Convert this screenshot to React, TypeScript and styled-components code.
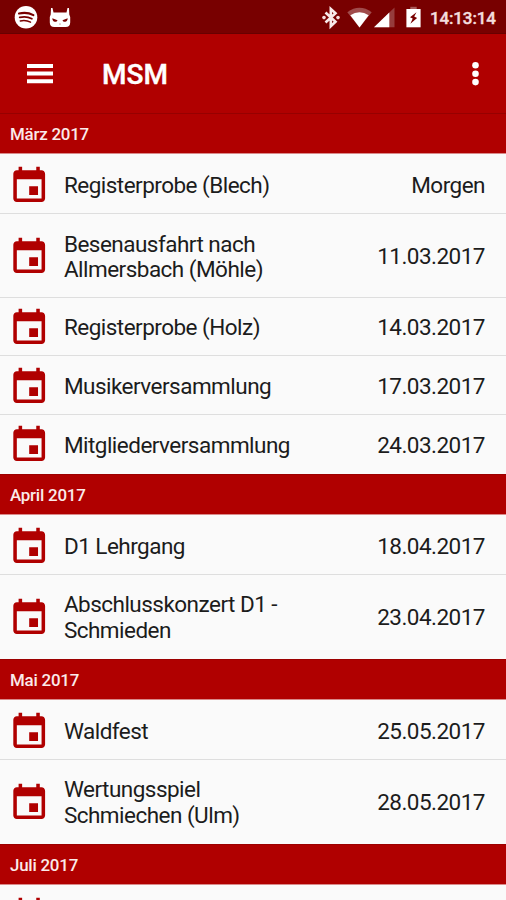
import React from "react";
import styled, { createGlobalStyle } from "styled-components";

const GlobalStyle = createGlobalStyle`
  * { box-sizing: border-box; }
  html, body { margin: 0; height: 900px; overflow: hidden; background: #fafafa; }
  body { font-family: Roboto, "Liberation Sans", sans-serif; }
`;

const Screen = styled.div`
  width: 506px;
  height: 900px;
  overflow: hidden;
  display: flex;
  flex-direction: column;
  background: #fafafa;
`;

const StatusBar = styled.header`
  height: 34px;
  flex: none;
  display: flex;
  align-items: center;
  justify-content: space-between;
  padding: 0 10px 0 14px;
  background: #780000;
  border-bottom: 1px solid #680000;
`;

const StatusGroup = styled.div`
  display: flex;
  align-items: center;
  height: 100%;
  svg { display: block; flex: none; }
  svg + svg { margin-left: 11px; }
`;

const Clock = styled.span`
  width: 66px;
  margin-left: 9px;
  padding-top: 2px;
  font-size: 17px;
  line-height: 20px;
  font-weight: 500;
  letter-spacing: -0.15px;
  white-space: nowrap;
  color: #f4dede;
  -webkit-text-stroke: 0.4px #f4dede;
`;

const AppBar = styled.div`
  height: 80px;
  flex: none;
  display: flex;
  align-items: center;
  padding: 0 17px 0 19px;
  background: #b00000;
  border-bottom: 1px solid #960000;
  svg { display: block; }
`;

const BarButton = styled.button`
  border: 0;
  padding: 0;
  background: none;
  color: #fff;
`;

const Title = styled.h1`
  flex: 1;
  margin: 2px 0 0 41px;
  font-size: 28px;
  line-height: 34px;
  font-weight: 500;
  color: #fff;
  -webkit-text-stroke: 0.4px #fff;
`;

const List = styled.main`
  flex: none;
`;

const MonthHeader = styled.h2<{ $first: boolean }>`
  height: ${(p) => (p.$first ? 40 : 41)}px;
  margin: 0;
  padding: ${(p) => (p.$first ? 0 : 1)}px 10px 0;
  display: flex;
  align-items: center;
  background: #b00000;
  border-top: ${(p) => (p.$first ? 0 : 1)}px solid #9c0000;
  border-bottom: 1px solid #d98a8a;
  font-size: 16.9px;
  font-weight: 500;
  letter-spacing: -0.22px;
  color: #fbeaea;
`;

const Events = styled.div`
  padding: 1.45px 0 0.45px;
`;

const EventRow = styled.div<{ $tall: boolean }>`
  height: ${(p) => (p.$tall ? 83.6 : 58.6)}px;
  display: flex;
  align-items: center;
  padding: 3.5px 21px 0 7.5px;
  border-bottom: 1px solid #dedede;
  font-size: 22.5px;
  line-height: 25.5px;
  letter-spacing: -0.52px;
  color: #1c1c1c;

  &:last-child { border-bottom-color: transparent; }
`;

const EventName = styled.span`
  flex: 1;
  margin-left: 14px;
  white-space: pre-line;
`;

const EventDate = styled.span`
  white-space: nowrap;
`;

const CalendarIcon = styled.svg`
  width: 42.4px;
  height: 42.4px;
  flex: none;
  margin-top: 0.5px;
  fill: #b00000;
`;

type Item = { name: string; date: string };

const months: { label: string; items: Item[] }[] = [
  {
    label: "März 2017",
    items: [
      { name: "Registerprobe (Blech)", date: "Morgen" },
      { name: "Besenausfahrt nach\nAllmersbach (Möhle)", date: "11.03.2017" },
      { name: "Registerprobe (Holz)", date: "14.03.2017" },
      { name: "Musikerversammlung", date: "17.03.2017" },
      { name: "Mitgliederversammlung", date: "24.03.2017" },
    ],
  },
  {
    label: "April 2017",
    items: [
      { name: "D1 Lehrgang", date: "18.04.2017" },
      { name: "Abschlusskonzert D1 -\nSchmieden", date: "23.04.2017" },
    ],
  },
  {
    label: "Mai 2017",
    items: [
      { name: "Waldfest", date: "25.05.2017" },
      { name: "Wertungsspiel\nSchmiechen (Ulm)", date: "28.05.2017" },
    ],
  },
  { label: "Juli 2017", items: [{ name: "", date: "" }] },
];

const Calendar = () => (
  <CalendarIcon viewBox="0 0 24 24">
    <path d="M17 12h-5v5h5v-5zM16 1v2H8V1H6v2H5c-1.11 0-1.99.9-1.99 2L3 19c0 1.1.89 2 2 2h14c1.1 0 2-.9 2-2V5c0-1.1-.9-2-2-2h-1V1h-2zm3 18H5V8h14v11z" />
  </CalendarIcon>
);

const Streaming = () => (
  <svg width="24" height="34" viewBox="0 0 24 34">
    <circle cx="12" cy="17.3" r="11.3" fill="#fff" />
    <g fill="none" stroke="#780000" strokeLinecap="round">
      <path d="M5 13.6c5-1.3 10-.8 14.4 1.5" strokeWidth="2.1" />
      <path d="M5.7 17.4c4.3-1.1 8.6-.6 12.2 1.3" strokeWidth="1.8" />
      <path d="M6.3 20.9c3.7-.8 7.2-.4 10.2 1.3" strokeWidth="1.5" />
    </g>
  </svg>
);

const CatFace = () => (
  <svg width="22" height="34" viewBox="0 0 22 34">
    <path
      fill="#fff"
      d="M2 8h1.500l1 4.500h13L18.500 8H20l.3 6.500.9 2.500v5.500c0 3-1.700 4.500-4.500 4.500H5.300C2.500 27 .8 25.500.8 22.500V17l.9-2.500z"
    />
    <path fill="#780000" d="M3.300 18.300l5.200 1.900c-.5 1.300-1.400 1.800-2.700 1.600-1.400-.2-2.400-1.300-2.500-3.500zM18.700 18.300l-5.200 1.900c.5 1.300 1.400 1.800 2.700 1.600 1.400-.2 2.400-1.300 2.500-3.500zM10.300 23.700h1.400l-.7 1z" />
  </svg>
);

const StatusIcons = () => (
  <svg width="100" height="34" viewBox="321 0 100 34">
    <g fill="none" stroke="#f8eaea" strokeWidth="2.6">
      <path d="M325.500 12.500l10 9.300-4.700 4.400V9l4.700 4.200-10 9.300" />
    </g>
    <circle cx="324" cy="17.600" r="1.800" fill="#f4dede" />
    <circle cx="338" cy="17.600" r="1.800" fill="#f4dede" />
    <path d="M347.300 12.200Q359.500 3.500 371.700 12.200L359.500 27.500z" fill="#a04b4b" />
    <path d="M350.300 15.200Q359.500 9.400 368.700 15.200L359.500 27.500z" fill="#fff" />
    <path d="M394.500 7.500V27.300H374z" fill="#963c3c" />
    <path d="M389.300 12.500V27.300H374z" fill="#fff" />
    <path d="M406.400 9h14.200v18.300h-14.200z" fill="#fff" />
    <path d="M410.300 6.800h6.400v2.200h-6.400z" fill="#a85b5b" />
    <path d="M416.500 12.200l-6.500 5 2.700 1.400-2.300 5.200 6.700-5.700-2.900-1.500z" fill="#780000" />
  </svg>
);

export default function App() {
  return (
    <>
      <GlobalStyle />
      <Screen>
        <StatusBar>
          <StatusGroup>
            <Streaming />
            <CatFace />
          </StatusGroup>
          <StatusGroup>
            <StatusIcons />
            <Clock>14:13:14</Clock>
          </StatusGroup>
        </StatusBar>
        <AppBar>
          <BarButton aria-label="Menu">
            <svg width="42" height="42" viewBox="0 0 42 42" fill="#fff">
              <path d="M8 10.900h26v4H8zM8 18.500h26v4H8zM8 26.200h26v4H8z" />
            </svg>
          </BarButton>
          <Title>MSM</Title>
          <BarButton aria-label="More">
            <svg width="27" height="42" viewBox="0 0 27 42" fill="#fff">
              <circle cx="13.500" cy="12.300" r="3.300" />
              <circle cx="13.500" cy="20.700" r="3.300" />
              <circle cx="13.500" cy="29.100" r="3.300" />
            </svg>
          </BarButton>
        </AppBar>
        <List>
          {months.map((month, index) => (
            <section key={month.label}>
              <MonthHeader $first={index === 0}>{month.label}</MonthHeader>
              <Events>
                {month.items.map((item) => (
                  <EventRow key={item.name} $tall={item.name.includes("\n")}>
                    <Calendar />
                    <EventName>{item.name}</EventName>
                    <EventDate>{item.date}</EventDate>
                  </EventRow>
                ))}
              </Events>
            </section>
          ))}
        </List>
      </Screen>
    </>
  );
}
